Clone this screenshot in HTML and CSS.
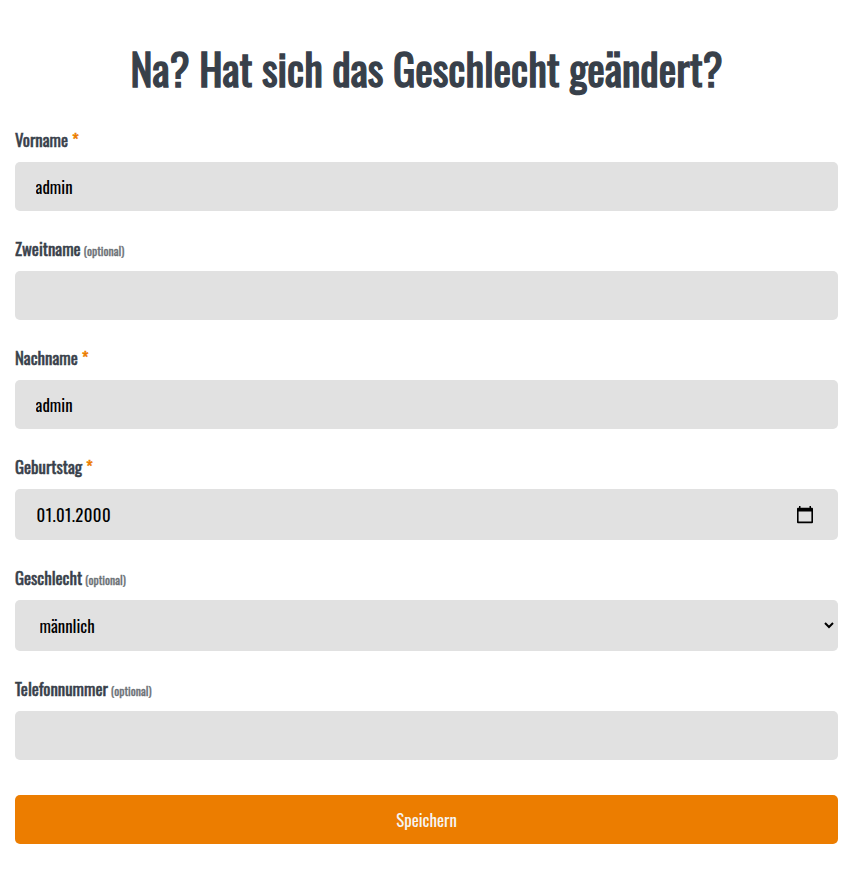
FILE: index.html
```
<!DOCTYPE html>
<html lang="de">
<head>
<meta charset="utf-8">
<title>Profil bearbeiten</title>
<link rel="stylesheet" href="styles.css">
</head>
<body>
<main class="page">
  <h1 class="title">Na? Hat sich das Geschlecht geändert?</h1>
  <form class="form">
    <div class="field">
      <label class="label" for="first">Vorname <span class="required">*</span></label>
      <input class="control" id="first" type="text" value="admin">
    </div>
    <div class="field">
      <label class="label" for="second">Zweitname <span class="optional">(optional)</span></label>
      <input class="control" id="second" type="text">
    </div>
    <div class="field">
      <label class="label" for="last">Nachname <span class="required">*</span></label>
      <input class="control" id="last" type="text" value="admin">
    </div>
    <div class="field">
      <label class="label" for="birthday">Geburtstag <span class="required">*</span></label>
      <div class="control control-date">
        <input class="date-input" id="birthday" type="text" value="01.01.2000">
        <svg class="calendar" viewBox="0 0 20 20" aria-hidden="true"><path fill-rule="evenodd" d="M4 1h1.500v1.700h9V1H16v1.700h1q1 0 1 1v13.500q0 1-1 1H3q-1 0-1-1V3.700q0-1 1-1h1zM3.600 6.500v10.100h12.800V6.500z"/></svg>
      </div>
    </div>
    <div class="field">
      <label class="label" for="gender">Geschlecht <span class="optional">(optional)</span></label>
      <select class="control control-select" id="gender"><option>männlich</option></select>
    </div>
    <div class="field">
      <label class="label" for="phone">Telefonnummer <span class="optional">(optional)</span></label>
      <input class="control" id="phone" type="tel">
    </div>
    <button class="submit" type="button">Speichern</button>
  </form>
</main>
</body>
</html>
```
FILE: styles.css
```
* { box-sizing: border-box; }
body {
  margin: 0;
  background: #fff;
  color: #38404a;
  font: 400 16.8px/27px Oswald, "Roboto Condensed", sans-serif;
}
.page { padding: 35px 10px 25px 15px; }
.title {
  margin: 0 0 24px;
  font-size: 41.7px;
  font-weight: 400;
  line-height: 67px;
  text-align: center;
  -webkit-text-stroke: 1.3px currentColor;
}
.form { display: flex; flex-direction: column; }
.field { display: flex; flex-direction: column; margin-bottom: 24px; }
.label { height: 36px; -webkit-text-stroke: 0.5px currentColor; }
.required { color: #ec7d00; }
.optional { margin-left: -1px; color: #6c7176; font-size: 11.76px; -webkit-text-stroke-width: 0.35px; }
.control {
  width: 100%;
  height: 49px;
  margin: 0;
  padding: 0 20px 1px 20.6px;
  border: 0;
  border-radius: 5px;
  background: #e1e1e1;
  color: #000;
  font: inherit;
}
.control-date { display: flex; align-items: center; height: 51px; padding: 0 23px 0 21.6px; }
.date-input { flex: 1; min-width: 0; padding: 0; border: 0; background: none; color: #000; font: inherit; letter-spacing: 0.4px; }
.calendar { width: 20px; height: 20px; fill: #000; }
.control-select { height: 51px; padding: 0 0 1px 20.6px; border-right: 1px solid #e1e1e1; }
.submit {
  height: 49px;
  margin-top: 11px;
  padding: 0 0 1px;
  border: 0;
  border-radius: 5px;
  background: #ec7d00;
  color: #f5f5f5;
  font: inherit;
}
```
